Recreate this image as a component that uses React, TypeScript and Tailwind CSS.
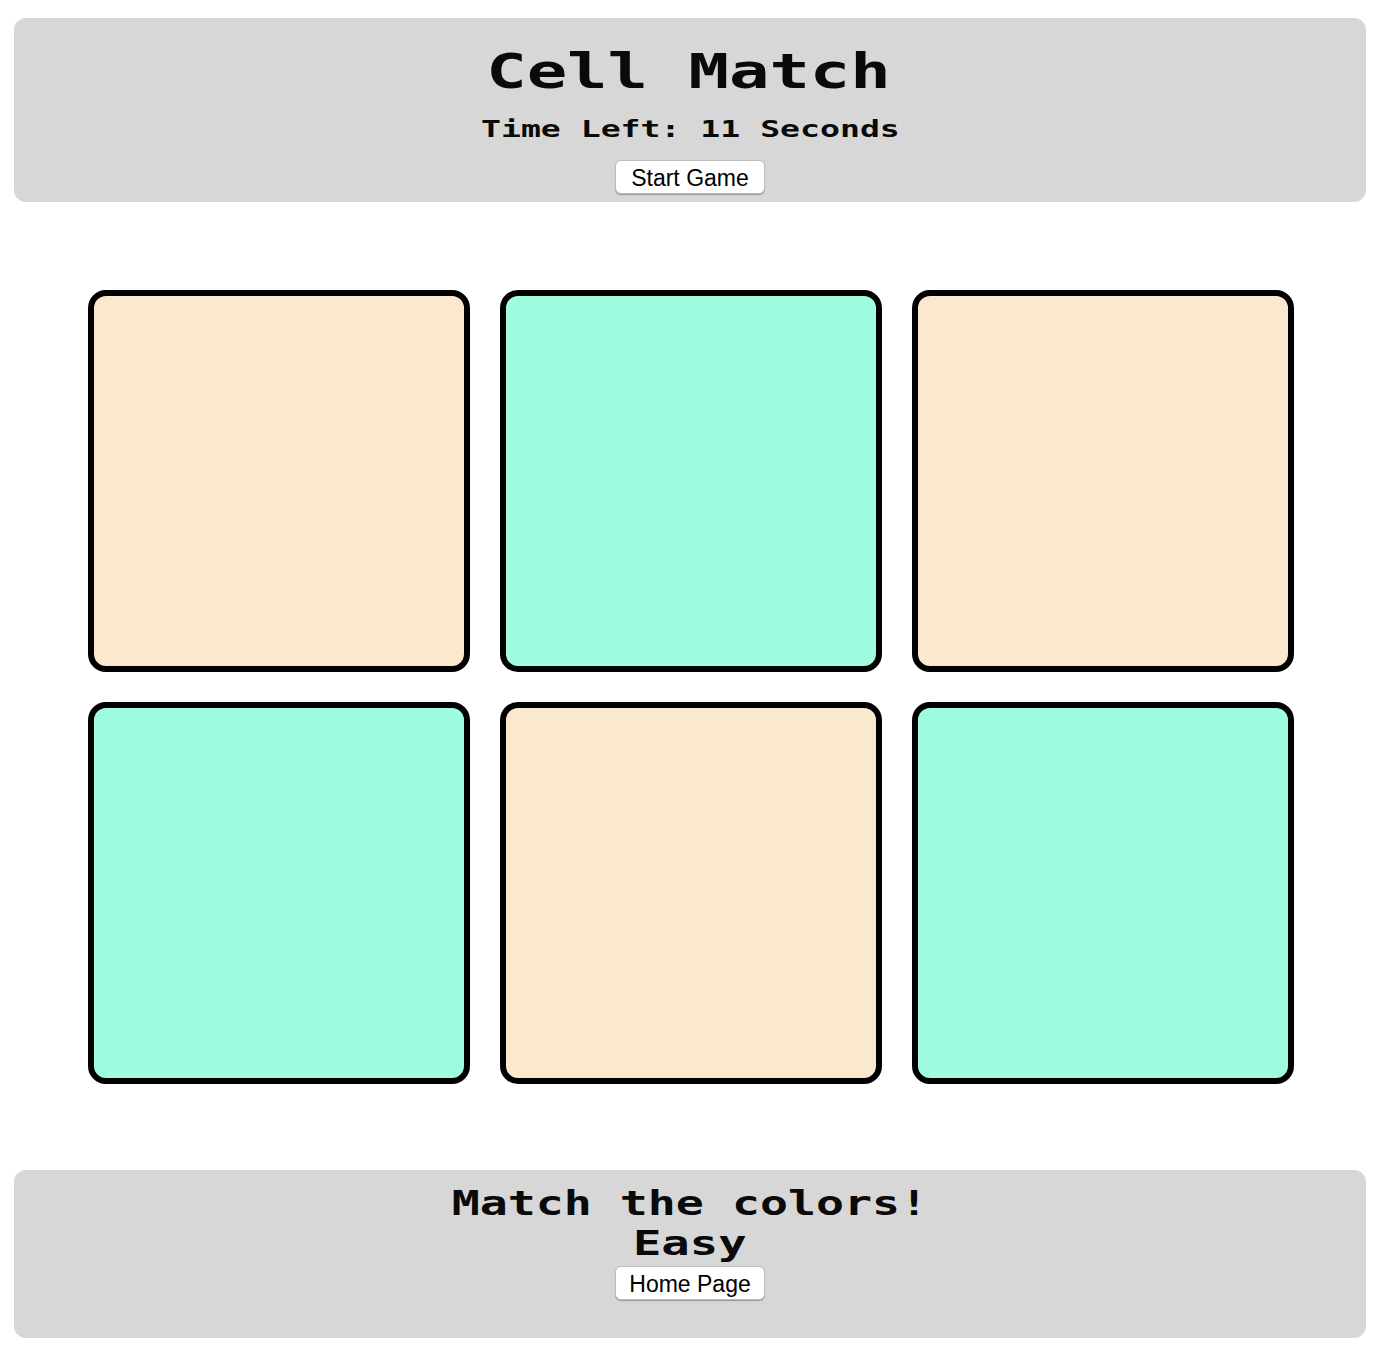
const cells = ["bg-[#fbe9cf]", "bg-[#a0fce0]", "bg-[#fbe9cf]", "bg-[#a0fce0]", "bg-[#fbe9cf]", "bg-[#a0fce0]"];

const pixelFont = "font-['DejaVu_Sans_Mono',monospace] font-bold text-[#0a0a0a] whitespace-pre";

function GameButton({ label }: { label: string }) {
  return (
    <button className="w-[150px] h-[34px] rounded-[6px] bg-white text-black text-[23px] leading-[34px] font-['Liberation_Sans',sans-serif] border border-[#bdbdbd] shadow-[0_1px_1px_rgba(0,0,0,0.3)]">
      {label}
    </button>
  );
}

export default function App() {
  return (
    <div className="w-[1380px] h-[1353px] bg-white pt-[18px] px-[14px] overflow-hidden">
      <header className="h-[184px] rounded-[12px] bg-[#d7d7d7] flex flex-col items-center">
        <h1 className={`${pixelFont} mt-[21px] h-[64px] text-[48px] leading-[64px] scale-x-[1.4] -translate-x-[2px]`}>Cell Match</h1>
        <p className={`${pixelFont} mt-[10px] h-[32px] text-[23px] leading-[32px] scale-x-[1.44]`}>Time Left: 11 Seconds</p>
        <div className="mt-[15px]">
          <GameButton label="Start Game" />
        </div>
      </header>

      <main className="mt-[88px] ml-[74px] grid grid-cols-[382px_382px_382px] gap-[30px]">
        {cells.map((color, index) => (
          <div key={index} className={`h-[382px] rounded-[18px] border-[6px] border-black ${color}`} />
        ))}
      </main>

      <footer className="mt-[86px] h-[168px] rounded-[12px] bg-[#d7d7d7] flex flex-col items-center">
        <p className={`${pixelFont} mt-[14px] h-[40px] text-[33px] leading-[40px] scale-x-[1.41]`}>Match the colors!</p>
        <p className={`${pixelFont} h-[40px] text-[33px] leading-[40px] scale-x-[1.43]`}>Easy</p>
        <div className="mt-[2px]">
          <GameButton label="Home Page" />
        </div>
      </footer>
    </div>
  );
}
